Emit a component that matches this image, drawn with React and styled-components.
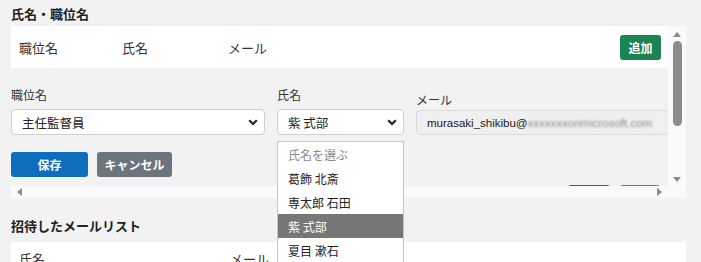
import React from "react";
import styled, { createGlobalStyle } from "styled-components";

const Global = createGlobalStyle`
  html, body { margin: 0; padding: 0; background: #f2f2f2; }
  body { font-family: "Noto Sans CJK JP", "Noto Sans", sans-serif; color: #222; font-size: 13px; }
  * { box-sizing: border-box; }
`;

const Page = styled.div`
  position: relative;
  width: 701px;
  height: 262px;
  overflow: hidden;
  padding: 0 15px 0 11px;
`;

const SectionTitle = styled.div`
  font-weight: 700;
  font-size: 13px;
  line-height: 16px;
  padding-top: ${(p) => p.$top}px;
  margin-bottom: ${(p) => p.$bottom}px;
  color: #222;
`;

const ScrollFrame = styled.div`
  width: 675px;
  display: grid;
  grid-template-columns: 657px 18px;
  grid-template-rows: 160px 12px;
  background: #fafafa;
`;

const Viewport = styled.div`
  overflow: hidden;
  background: #f2f2f2;
`;

const HeaderRow = styled.div`
  height: 42px;
  background: #fff;
  display: flex;
  align-items: center;
  padding: 0 7px 0 8px;
`;

const Col = styled.div`
  width: ${(p) => (p.$w ? `${p.$w}px` : "auto")};
  flex: ${(p) => (p.$w ? "none" : "1")};
  font-size: 13px;
  color: #333;
`;

const Btn = styled.button`
  height: 25px;
  width: ${(p) => p.$w}px;
  border: none;
  border-radius: 3px;
  font-family: inherit;
  font-weight: 700;
  font-size: 12px;
  color: #fff;
  padding: 0;
  background: ${(p) =>
    p.$kind === "green" ? "#1c8352" : p.$kind === "blue" ? "#0e6dbd" : "#6c757d"};
  flex: none;
`;

const FormRow = styled.div`
  display: flex;
  gap: 12px;
  padding-top: 19px;
`;

const Field = styled.div`
  width: ${(p) => p.$w}px;
  flex: none;
  display: flex;
  flex-direction: column;
  padding-top: ${(p) => p.$pt || 0}px;
`;

const Label = styled.div`
  font-size: 12px;
  line-height: 16px;
  color: #333;
  margin-bottom: ${(p) => p.$mb}px;
`;

const SelectBox = styled.div`
  height: 26px;
  background: #fff;
  border: 1px solid #cfcfcf;
  border-radius: 4px;
  display: flex;
  align-items: center;
  justify-content: space-between;
  padding: 0 6px 0 10px;
  font-size: 12.5px;
  color: #222;
`;

const InputBox = styled.div`
  height: 25px;
  background: #efefef;
  border: 1px solid #dadada;
  border-radius: 4px;
  display: flex;
  align-items: center;
  padding: 0 10px;
  font-family: "Liberation Sans", Arial, sans-serif;
  font-size: 11.5px;
  color: #222;
  white-space: nowrap;
  overflow: hidden;
`;

const Blurred = styled.span`
  color: #8a8a8a;
  filter: blur(1.2px);
`;

const ButtonRow = styled.div`
  display: flex;
  gap: ${(p) => p.$gap}px;
  justify-content: ${(p) => (p.$end ? "flex-end" : "flex-start")};
  margin-top: ${(p) => p.$mt}px;
  padding-right: ${(p) => p.$pr || 0}px;
`;

const VTrack = styled.div`
  grid-row: 1;
  grid-column: 2;
  display: flex;
  flex-direction: column;
  align-items: center;
  padding: 6px 0 4px;
`;

const Thumb = styled.div`
  width: 9px;
  height: 85px;
  border-radius: 5px;
  background: #8c8c8c;
  margin-top: 4px;
`;

const Spacer = styled.div`
  flex: 1;
`;

const HTrack = styled.div`
  grid-row: 2;
  grid-column: 1;
  display: flex;
  align-items: center;
  justify-content: space-between;
  padding: 0 6px 0 6px;
`;

const Corner = styled.div`
  grid-row: 2;
  grid-column: 2;
`;

const Arrow = ({ dir }) => {
  const pts = {
    up: "0,5 4,0 8,5",
    down: "0,0 8,0 4,5",
    left: "5,0 5,8 0,4",
    right: "0,0 0,8 5,4",
  }[dir];
  const vertical = dir === "up" || dir === "down";
  return (
    <svg width={vertical ? 8 : 5} height={vertical ? 5 : 8} viewBox={vertical ? "0 0 8 5" : "0 0 5 8"}>
      <polygon points={pts} fill="#8a8a8a" />
    </svg>
  );
};

const Chevron = () => (
  <svg width="10" height="7" viewBox="0 0 10 7">
    <polyline points="1.2,1.2 5,5 8.8,1.2" fill="none" stroke="#222" strokeWidth="2.2" />
  </svg>
);

const ListPanel = styled.div`
  width: 675px;
  height: 40px;
  background: #fff;
  display: flex;
  padding: 9px 8px 0;
  line-height: 16px;
`;

const Dropdown = styled.div`
  position: absolute;
  left: 277px;
  top: 141px;
  width: 127px;
  background: #fff;
  border: 1px solid #c6c6c6;
  border-bottom: none;
`;

const Option = styled.div`
  height: 24px;
  display: flex;
  align-items: center;
  padding-left: 10px;
  font-size: 12px;
  color: ${(p) => (p.$placeholder ? "#8a8a8a" : p.$selected ? "#fff" : "#222")};
  background: ${(p) => (p.$selected ? "#777" : "#fff")};
`;

const options = [
  { label: "氏名を選ぶ", placeholder: true },
  { label: "葛飾 北斎" },
  { label: "専太郎 石田" },
  { label: "紫 式部", selected: true },
  { label: "夏目 漱石" },
];

export default function App() {
  return (
    <>
      <Global />
      <Page>
        <SectionTitle $top={6} $bottom={4}>氏名・職位名</SectionTitle>
        <ScrollFrame>
          <Viewport>
            <HeaderRow>
              <Col $w={103}>職位名</Col>
              <Col $w={106}>氏名</Col>
              <Col>メール</Col>
              <Btn $kind="green" $w={41}>追加</Btn>
            </HeaderRow>
            <FormRow>
              <Field $w={254}>
                <Label $mb={6}>職位名</Label>
                <SelectBox>
                  <span>主任監督員</span>
                  <Chevron />
                </SelectBox>
              </Field>
              <Field $w={127}>
                <Label $mb={6}>氏名</Label>
                <SelectBox>
                  <span>紫 式部</span>
                  <Chevron />
                </SelectBox>
              </Field>
              <Field $w={253} $pt={5}>
                <Label $mb={2}>メール</Label>
                <InputBox>
                  murasaki_shikibu@<Blurred>xxxxxxxonmicrosoft.com</Blurred>
                </InputBox>
              </Field>
            </FormRow>
            <ButtonRow $gap={9} $mt={17}>
              <Btn $kind="blue" $w={77}>保存</Btn>
              <Btn $kind="gray" $w={75}>キャンセル</Btn>
            </ButtonRow>
            <ButtonRow $gap={10} $mt={8} $end $pr={8}>
              <Btn $kind="blue" $w={42} aria-label="編集" />
              <Btn $kind="gray" $w={40} aria-label="削除" />
            </ButtonRow>
          </Viewport>
          <VTrack>
            <Arrow dir="up" />
            <Thumb />
            <Spacer />
            <Arrow dir="down" />
          </VTrack>
          <HTrack>
            <Arrow dir="left" />
            <Arrow dir="right" />
          </HTrack>
          <Corner />
        </ScrollFrame>
        <SectionTitle $top={20} $bottom={8}>招待したメールリスト</SectionTitle>
        <ListPanel>
          <Col $w={211}>氏名</Col>
          <Col>メール</Col>
        </ListPanel>
        <Dropdown>
          {options.map((o) => (
            <Option key={o.label} $placeholder={o.placeholder} $selected={o.selected}>
              {o.label}
            </Option>
          ))}
        </Dropdown>
      </Page>
    </>
  );
}
